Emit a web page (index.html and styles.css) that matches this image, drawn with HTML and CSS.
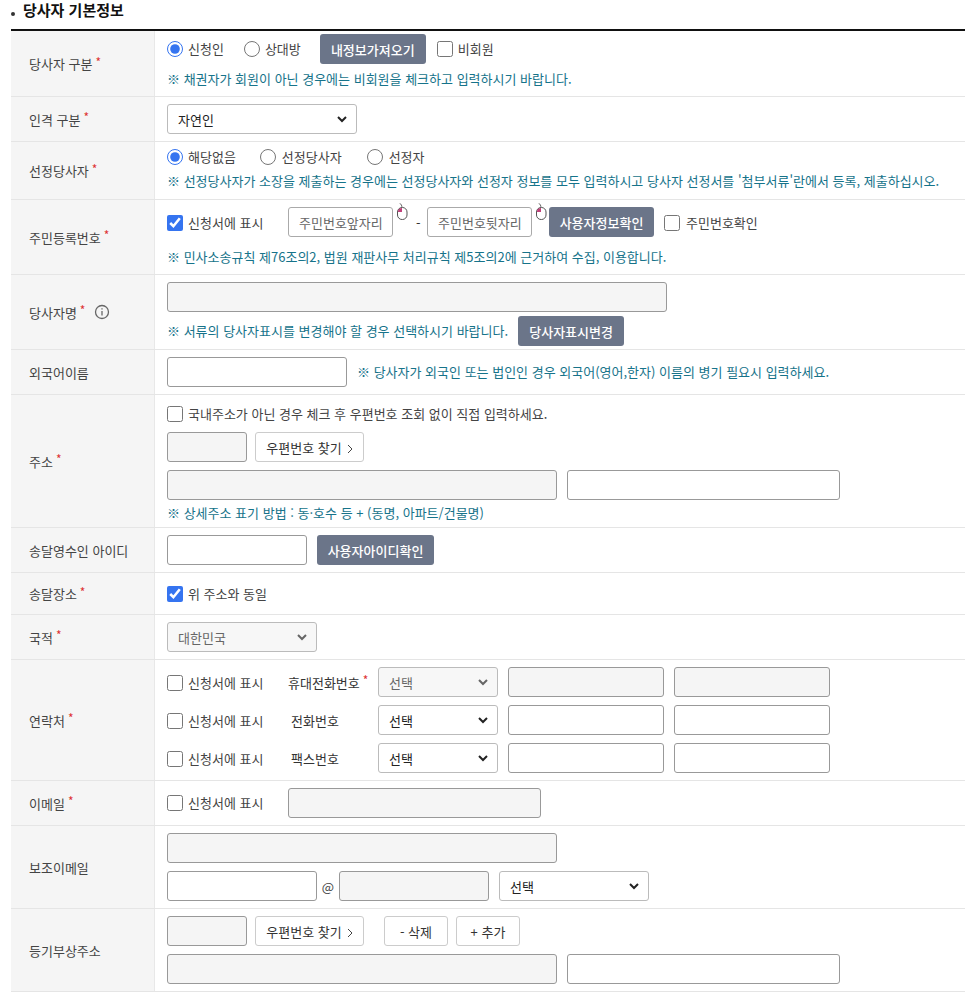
FILE: index.html
```html
<!DOCTYPE html>
<html lang="ko">
<head>
<meta charset="utf-8">
<title>당사자 기본정보</title>
<link rel="stylesheet" href="styles.css">
</head>
<body>
<h2 class="title">당사자 기본정보</h2>
<div class="form">
  <div class="row r1">
    <div class="th">당사자 구분<i>*</i></div>
    <div class="td">
      <div class="line">
        <label class="chk mr-r1"><input type="radio" name="a" checked>신청인</label>
        <label class="chk mr-r2"><input type="radio" name="a">상대방</label>
        <button class="btn dark b106">내정보가져오기</button>
        <label class="chk ml11"><input type="checkbox">비회원</label>
      </div>
      <p class="note mt5">※ 채권자가 회원이 아닌 경우에는 비회원을 체크하고 입력하시기 바랍니다.</p>
    </div>
  </div>
  <div class="row r2">
    <div class="th">인격 구분<i>*</i></div>
    <div class="td"><select class="sel w190"><option>자연인</option></select></div>
  </div>
  <div class="row r3">
    <div class="th">선정당사자<i>*</i></div>
    <div class="td">
      <div class="line short">
        <label class="chk mr-s1"><input type="radio" name="b" checked>해당없음</label>
        <label class="chk g6 mr-s2"><input type="radio" name="b">선정당사자</label>
        <label class="chk g6"><input type="radio" name="b">선정자</label>
      </div>
      <p class="note mt4">※ 선정당사자가 소장을 제출하는 경우에는 선정당사자와 선정자 정보를 모두 입력하시고 당사자 선정서를 '첨부서류'란에서 등록, 제출하십시오.</p>
    </div>
  </div>
  <div class="row r4">
    <div class="th">주민등록번호<i>*</i></div>
    <div class="td">
      <div class="line">
        <label class="chk dn w121"><input type="checkbox" checked>신청서에 표시</label>
        <span class="secure">
          <input class="inp w105 ctr" placeholder="주민번호앞자리">
          <svg class="mouse" viewBox="0 0 14 18" aria-hidden="true"><path class="wire" d="M7 4.500C7 2.500 6 1 4.500 0"/><rect class="body" x="2.500" y="4.500" width="9.500" height="12" rx="4.500"/><path class="btnpart" d="M3 9V8.500C3 6.500 4.500 5 7 5V9Z"/></svg>
        </span>
        <span class="dash">-</span>
        <span class="secure">
          <input class="inp w105 ctr" placeholder="주민번호뒷자리">
          <svg class="mouse" viewBox="0 0 14 18" aria-hidden="true"><path class="wire" d="M7 4.500C7 2.500 6 1 4.500 0"/><rect class="body" x="2.500" y="4.500" width="9.500" height="12" rx="4.500"/><path class="btnpart" d="M3 9V8.500C3 6.500 4.500 5 7 5V9Z"/></svg>
        </span>
        <button class="btn dark b105 ml17">사용자정보확인</button>
        <label class="chk g6 dn ml10"><input type="checkbox">주민번호확인</label>
      </div>
      <p class="note mt10">※ 민사소송규칙 제76조의2, 법원 재판사무 처리규칙 제5조의2에 근거하여 수집, 이용합니다.</p>
    </div>
  </div>
  <div class="row r5">
    <div class="th">당사자명<i>*</i>
      <svg class="info" viewBox="0 0 16 16" aria-hidden="true"><circle cx="8" cy="8" r="6.500"/><path d="M8 7v4.500"/><path d="M8 4.200v1.300"/></svg>
    </div>
    <div class="td">
      <input class="inp off w500" disabled>
      <div class="line mt4">
        <p class="note">※ 서류의 당사자표시를 변경해야 할 경우 선택하시기 바랍니다.</p>
        <button class="btn dark b106 ml10">당사자표시변경</button>
      </div>
    </div>
  </div>
  <div class="row r2">
    <div class="th">외국어이름</div>
    <div class="td line">
      <input class="inp w180">
      <p class="note ml10">※ 당사자가 외국인 또는 법인인 경우 외국어(영어,한자) 이름의 병기 필요시 입력하세요.</p>
    </div>
  </div>
  <div class="row r7">
    <div class="th">주소<i>*</i></div>
    <div class="td">
      <div class="line short">
        <label class="chk"><input type="checkbox">국내주소가 아닌 경우 체크 후 우편번호 조회 없이 직접 입력하세요.</label>
      </div>
      <div class="line mt8">
        <input class="inp off w80" disabled>
        <button class="btn light b109 ml8">우편번호 찾기<svg class="chev" viewBox="0 0 6 10" aria-hidden="true"><path d="M1 1l4 4-4 4"/></svg></button>
      </div>
      <div class="line mt8">
        <input class="inp off w390" disabled>
        <input class="inp w273 ml10">
      </div>
      <p class="note mt3">※ 상세주소 표기 방법 : 동·호수 등 + (동명, 아파트/건물명)</p>
    </div>
  </div>
  <div class="row r2">
    <div class="th">송달영수인 아이디</div>
    <div class="td line">
      <input class="inp w140">
      <button class="btn dark b117 ml10">사용자아이디확인</button>
    </div>
  </div>
  <div class="row r9">
    <div class="th">송달장소<i>*</i></div>
    <div class="td"><div class="line short"><label class="chk"><input type="checkbox" checked>위 주소와 동일</label></div></div>
  </div>
  <div class="row r2">
    <div class="th">국적<i>*</i></div>
    <div class="td"><select class="sel w150" disabled><option>대한민국</option></select></div>
  </div>
  <div class="row r11">
    <div class="th">연락처<i>*</i></div>
    <div class="td">
      <div class="line">
        <label class="chk dn w121"><input type="checkbox">신청서에 표시</label>
        <span class="ctype">휴대전화번호<i>*</i></span>
        <select class="sel w120" disabled><option>선택</option></select>
        <input class="inp off w156 ml10" disabled>
        <input class="inp off w156 ml10" disabled>
      </div>
      <div class="line mt8">
        <label class="chk dn w121"><input type="checkbox">신청서에 표시</label>
        <span class="ctype in">전화번호</span>
        <select class="sel w120"><option>선택</option></select>
        <input class="inp w156 ml10">
        <input class="inp w156 ml10">
      </div>
      <div class="line mt8">
        <label class="chk dn w121"><input type="checkbox">신청서에 표시</label>
        <span class="ctype in">팩스번호</span>
        <select class="sel w120"><option>선택</option></select>
        <input class="inp w156 ml10">
        <input class="inp w156 ml10">
      </div>
    </div>
  </div>
  <div class="row r2">
    <div class="th">이메일<i>*</i></div>
    <div class="td line">
      <label class="chk w121"><input type="checkbox">신청서에 표시</label>
      <input class="inp off w253" disabled>
    </div>
  </div>
  <div class="row r13">
    <div class="th">보조이메일</div>
    <div class="td">
      <input class="inp off w390" disabled>
      <div class="line mt8">
        <input class="inp w150">
        <span class="at">@</span>
        <input class="inp off w150" disabled>
        <select class="sel w150 ml10"><option>선택</option></select>
      </div>
    </div>
  </div>
  <div class="row r13">
    <div class="th">등기부상주소</div>
    <div class="td">
      <div class="line">
        <input class="inp off w80" disabled>
        <button class="btn light b109 ml8">우편번호 찾기<svg class="chev" viewBox="0 0 6 10" aria-hidden="true"><path d="M1 1l4 4-4 4"/></svg></button>
        <button class="btn light b64 ml20">- 삭제</button>
        <button class="btn light b64 ml8">+ 추가</button>
      </div>
      <div class="line mt8">
        <input class="inp off w390" disabled>
        <input class="inp w273 ml10">
      </div>
    </div>
  </div>
</div>
</body>
</html>
```
FILE: styles.css
```css
* { box-sizing: border-box; }
html, body { margin: 0; padding: 0; background: #fff; }
body {
  width: 970px;
  font-family: "Noto Sans CJK KR", "Noto Sans", sans-serif;
  font-size: 13px;
  color: #333;
}
.title {
  margin: 0;
  height: 29px;
  padding: 0 0 0 23px;
  font-size: 15px;
  line-height: 20px;
  font-weight: 700;
  color: #111;
  position: relative;
}
.title::before {
  content: "";
  position: absolute;
  left: 11px;
  top: 12px;
  width: 4px;
  height: 4px;
  border-radius: 50%;
  background: #333;
}
.form {
  margin-left: 11px;
  width: 954px;
  border-top: 2px solid #111;
}
.row {
  display: flex;
  border-bottom: 1px solid #e5e5e5;
}
.th {
  flex: none;
  width: 144px;
  padding-left: 18px;
  background: #f5f5f5;
  border-right: 1px solid #e8e8e8;
  display: flex;
  align-items: center;
  color: #444;
}
.th i, .ctype i {
  font-style: normal;
  color: #d33;
  font-size: 12px;
  line-height: 1;
  margin: -4px 0 0 3px;
}
.td {
  flex: 1;
  min-width: 0;
  padding: 7px 12px;
}
.td.line { display: flex; height: auto; }
.line { display: flex; align-items: center; height: 30px; }
.line.short { height: 20px; }
.note {
  margin: 0;
  height: 20px;
  line-height: 20px;
  font-size: 13px;
  color: #16738a;
  white-space: nowrap;
}
.chk {
  display: inline-flex;
  align-items: center;
  gap: 5px;
  white-space: nowrap;
  color: #444;
  line-height: 20px;
}
.chk.g6 { gap: 6px; }
.chk.dn { margin-top: 2px; }
.chk input {
  margin: 0;
  width: 16px;
  height: 16px;
  accent-color: #3574f0;
  flex: none;
}
.inp {
  height: 30px;
  padding: 0 10px;
  border: 1px solid #999;
  border-radius: 3px;
  background: #fff;
  font: inherit;
  flex: none;
  display: block;
}
.inp.off { background: #f5f5f5; border-color: #999; }
.inp.ctr { text-align: center; border-color: #aaa; }
.inp::placeholder { color: #666; opacity: 1; }
.sel {
  appearance: none;
  height: 30px;
  padding: 0 10px;
  border: 1px solid #bbb;
  border-radius: 3px;
  background: #fff url("data:image/svg+xml,%3Csvg xmlns='http://www.w3.org/2000/svg' width='10' height='7'%3E%3Cpath d='M1 1l4 4 4-4' fill='none' stroke='%23222' stroke-width='2'/%3E%3C/svg%3E") no-repeat right 9px center;
  font: inherit;
  color: #222;
  flex: none;
  display: block;
}
.sel:disabled {
  background-color: #f7f7f7;
  background-image: url("data:image/svg+xml,%3Csvg xmlns='http://www.w3.org/2000/svg' width='10' height='7'%3E%3Cpath d='M1 1l4 4 4-4' fill='none' stroke='%23666' stroke-width='2'/%3E%3C/svg%3E");
  color: #666;
  opacity: 1;
}
.btn {
  height: 30px;
  padding: 0;
  border-radius: 3px;
  font: inherit;
  flex: none;
  white-space: nowrap;
}
.btn.dark { background: #6b7589; border: 0; color: #fff; font-weight: 500; }
.btn.light { background: #fff; border: 1px solid #ccc; color: #333; }
.chev {
  display: inline-block;
  width: 6px;
  height: 10px;
  margin-left: 5px;
  vertical-align: -1px;
  fill: none;
  stroke: #444;
  stroke-width: 1;
}
.secure { position: relative; display: block; flex: none; width: 105px; }
.mouse {
  position: absolute;
  left: 107px;
  top: -4px;
  width: 14px;
  height: 18px;
  fill: none;
}
.mouse .wire { stroke: #444; stroke-width: .8; }
.mouse .body { stroke: #555; stroke-width: 1; fill: #fff; }
.mouse .btnpart { fill: #c0407a; }
.dash { width: 34px; padding-left: 23px; color: #333; flex: none; }
.info {
  width: 16px;
  height: 16px;
  margin-left: 9px;
  fill: none;
  stroke: #666;
  stroke-width: 1.300;
}
.ctype { display: flex; align-items: center; flex: none; width: 90px; color: #333; }
.ctype.in { padding-left: 3px; }
.at { flex: none; width: 22px; text-align: center; color: #444; }

.r1 .td { padding: 3px 12px 7px; }
.r3 .td { padding: 5px 12px 8px; }
.r7 .td { padding: 9px 12px 4px; }
.r9 .td { padding: 11px 12px 10px; }
.r5 .td { padding: 7px 12px 3px; }

.w80 { width: 80px; } .w105 { width: 105px; } .w120 { width: 120px; } .w121 { width: 121px; }
.w140 { width: 140px; } .w150 { width: 150px; } .w156 { width: 156px; } .w180 { width: 180px; }
.w190 { width: 190px; } .w253 { width: 253px; } .w273 { width: 273px; } .w390 { width: 390px; } .w500 { width: 500px; }
.b64 { width: 64px; } .b105 { width: 105px; } .b106 { width: 106px; } .b109 { width: 109px; } .b117 { width: 117px; }
.mt3 { margin-top: 3px; } .mt4 { margin-top: 4px; } .mt5 { margin-top: 5px; } .mt8 { margin-top: 8px; } .mt10 { margin-top: 10px; }
.ml8 { margin-left: 8px; } .ml10 { margin-left: 10px; } .ml11 { margin-left: 11px; } .ml17 { margin-left: 17px; } .ml20 { margin-left: 20px; }
.mr-r1 { margin-right: 20px; } .mr-r2 { margin-right: 19px; }
.mr-s1 { margin-right: 24px; } .mr-s2 { margin-right: 25px; }
```
